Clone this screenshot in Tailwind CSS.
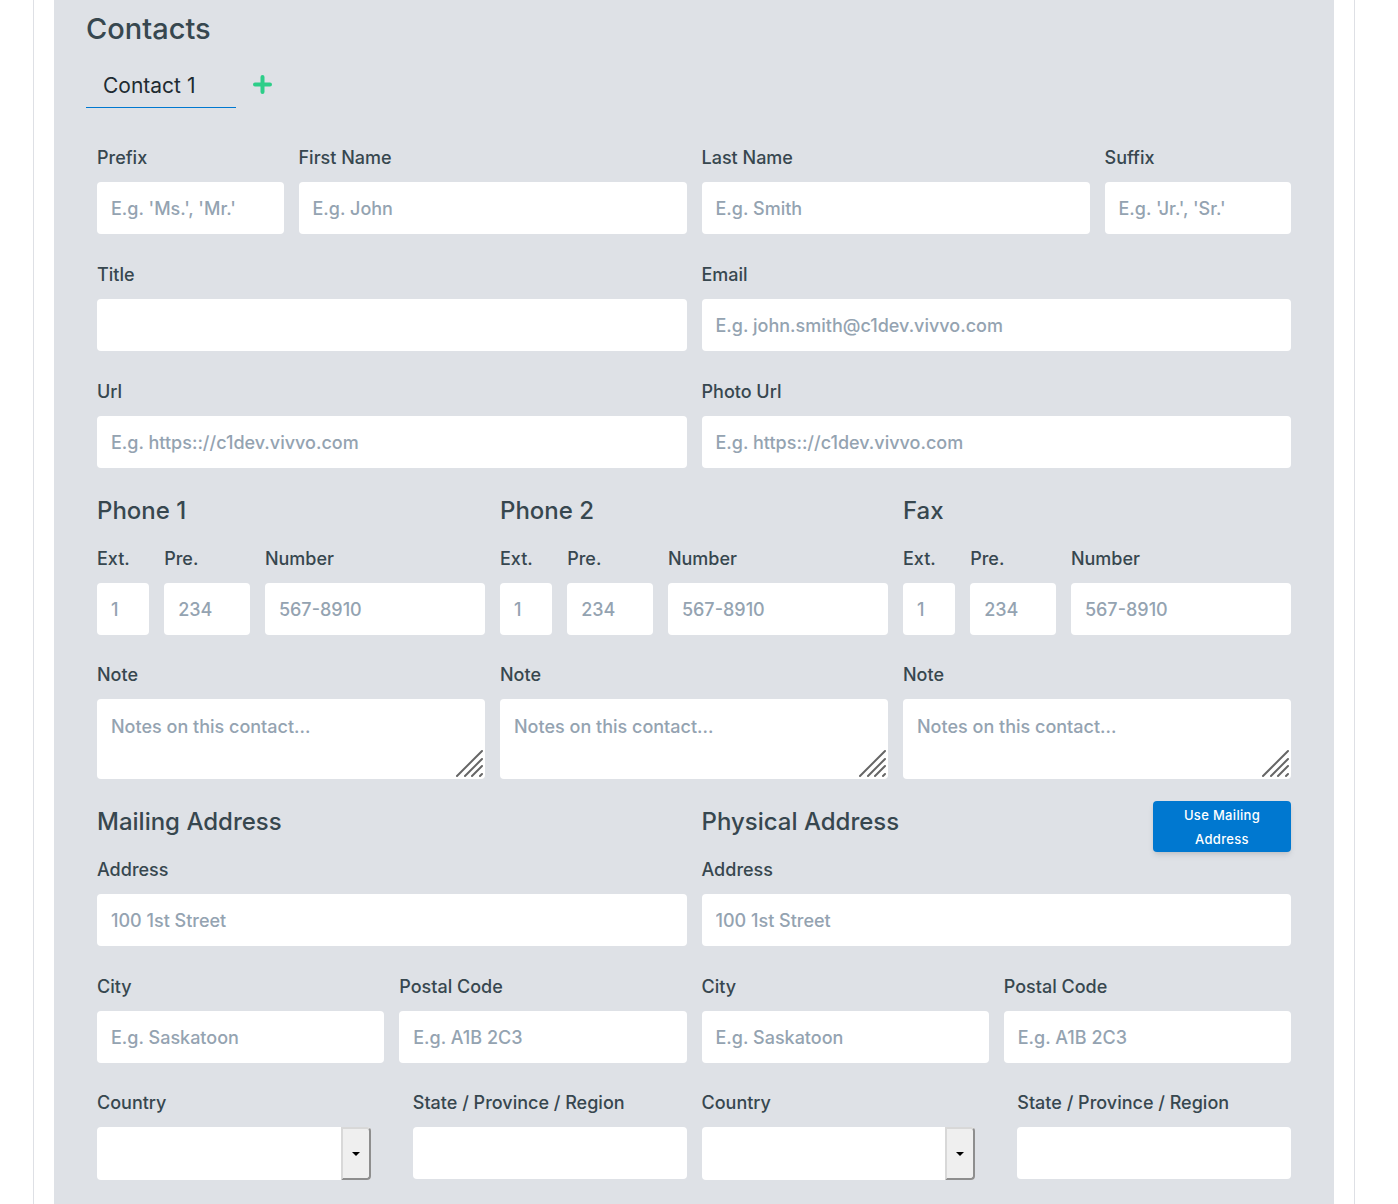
<!DOCTYPE html>
<html lang="en">
<head>
<meta charset="utf-8">
<meta name="viewport" content="width=device-width, initial-scale=1">
<title>Contacts</title>
<script src="https://cdn.jsdelivr.net/npm/@tailwindcss/browser@4"></script>
</head>
<body class="bg-white font-['Inter',sans-serif] text-lg leading-7 font-medium text-[#37474f]">
<main class="min-h-screen pr-[43px] pl-[33px]">
<div class="flex min-h-screen border-x border-[#dee0e5] px-5">
<form class="min-h-screen w-full bg-[#dee1e6] px-8 pt-2 pb-6">
  <h1 class="text-[29px] leading-[42px]">Contacts</h1>
  <nav class="mt-3 flex items-start">
    <a href="#contact-1" class="h-[46px] w-[150px] border-b border-[#0078d0] px-[17px] pt-2 text-[21px] leading-8 font-normal text-[#212b31]">Contact 1</a>
    <button type="button" aria-label="Add contact" class="mt-3 ml-4">
      <svg class="block size-[21px]" viewBox="0 0 21 21" fill="none" stroke="#2dce89" stroke-width="4" stroke-linecap="round"><path d="M10.500 3v15M3 10.500h15"/></svg>
    </button>
  </nav>

  <div id="contact-1" class="px-[11px] pt-9">
    <div id="general" class="grid grid-cols-12 gap-x-[15px] gap-y-[27px]"></div>
    <div id="phones" class="mt-6 grid grid-cols-3 gap-x-[15px]"></div>
    <div class="mt-5 grid grid-cols-2 gap-x-[15px]">
      <section data-address="mailing">
        <div class="flex h-[57px] items-start justify-between"><h2 class="text-2xl leading-[46px]">Mailing Address</h2></div>
      </section>
      <section data-address="physical">
        <div class="flex h-[57px] items-start justify-between"><h2 class="text-2xl leading-[46px]">Physical Address</h2>
          <button type="button" class="mt-[2px] h-[51px] w-[138px] rounded bg-[#0078d0] px-5 text-[13px] leading-6 font-medium tracking-wide text-white shadow-md">Use Mailing Address</button>
        </div>
      </section>
    </div>
  </div>
</form>
</div>
</main>

<script>
const control = 'block h-[52px] w-full rounded bg-white px-[14px] pt-[1px] text-lg text-[#37474f] placeholder:text-[#94a3b1]';
const field = (id, label, placeholder = '', span = '') => `
  <div class="${span}">
    <label for="${id}" class="mb-[10px] block whitespace-nowrap">${label}</label>
    <input id="${id}" type="text" placeholder="${placeholder}" class="${control}">
  </div>`;

document.getElementById('general').innerHTML =
  field('prefix', 'Prefix', "E.g. 'Ms.', 'Mr.'", 'col-span-2') +
  field('first', 'First Name', 'E.g. John', 'col-span-4') +
  field('last', 'Last Name', 'E.g. Smith', 'col-span-4') +
  field('suffix', 'Suffix', "E.g. 'Jr.', 'Sr.'", 'col-span-2') +
  field('title', 'Title', '', 'col-span-6') +
  field('email', 'Email', 'E.g. john.smith@c1dev.vivvo.com', 'col-span-6') +
  field('url', 'Url', 'E.g. https:://c1dev.vivvo.com', 'col-span-6') +
  field('photo', 'Photo Url', 'E.g. https:://c1dev.vivvo.com', 'col-span-6');

document.getElementById('phones').innerHTML = ['Phone 1', 'Phone 2', 'Fax'].map((name, i) => `
  <section>
    <h2 class="text-2xl leading-[38px]">${name}</h2>
    <div class="mt-[15px] grid grid-cols-12 gap-x-[15px]">
      ${field('ext' + i, 'Ext.', '1', 'col-span-2')}
      ${field('pre' + i, 'Pre.', '234', 'col-span-3')}
      ${field('num' + i, 'Number', '567-8910', 'col-span-7')}
    </div>
    <label for="note${i}" class="mt-[26px] mb-[10px] block">Note</label>
    <div class="relative">
      <textarea id="note${i}" placeholder="Notes on this contact..." class="block h-20 w-full resize-none rounded bg-white px-[14px] py-[14px] text-lg leading-7 placeholder:text-[#94a3b1]"></textarea>
      <svg class="pointer-events-none absolute right-0 bottom-0 size-[30px]" viewBox="0 0 30 30" stroke="#666" stroke-width="2" stroke-linecap="round"><path d="M2 27 27 2M10 27 27 10M17 27 27 17M25 27l2-2"/></svg>
    </div>
  </section>`).join('');

document.querySelectorAll('[data-address]').forEach(section => {
  const id = section.dataset.address;
  section.insertAdjacentHTML('beforeend', `
    ${field(id + '-street', 'Address', '100 1st Street')}
    <div class="mt-[27px] grid grid-cols-2 gap-x-[15px]">
      ${field(id + '-city', 'City', 'E.g. Saskatoon')}
      ${field(id + '-postal', 'Postal Code', 'E.g. A1B 2C3')}
    </div>
    <div class="mt-[26px] grid grid-cols-2 gap-x-[42px]">
      <div>
        <label for="${id}-country" class="mb-[10px] block">Country</label>
        <div class="relative">
          <select id="${id}-country" class="block h-[53px] w-full appearance-none rounded bg-white px-[14px]"><option></option><option>Canada</option></select>
          <span class="pointer-events-none absolute inset-y-0 right-0 flex w-[30px] items-center justify-center rounded-r border-2 border-t-[#d8d8d8] border-r-[#8e8e8e] border-b-[#8e8e8e] border-l-[#d8d8d8] bg-[#efefef]">
            <svg class="h-1 w-2" viewBox="0 0 8 4" fill="#000"><path d="M0 0h8L4 4z"/></svg>
          </span>
        </div>
      </div>
      ${field(id + '-region', 'State / Province / Region')}
    </div>`);
});
</script>
</body>
</html>
